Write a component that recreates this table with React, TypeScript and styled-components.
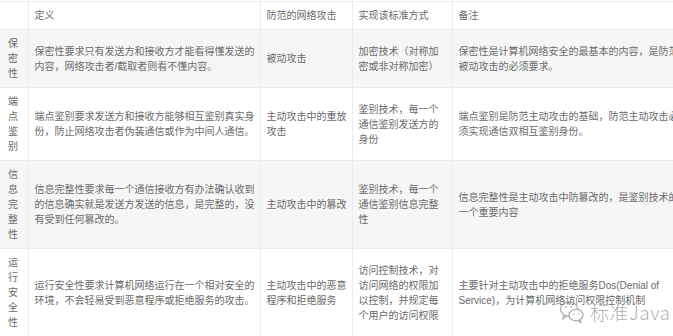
import React from "react";
import styled, { createGlobalStyle } from "styled-components";

const Global = createGlobalStyle`
  html, body { margin: 0; padding: 0; background: #fff; overflow: hidden; }
  body { width: 673px; height: 336px; }
`;

const Page = styled.div`
  position: relative;
  width: 673px;
  height: 336px;
  overflow: hidden;
  padding-top: 1px;
  box-sizing: border-box;
`;

const Table = styled.table`
  border-collapse: collapse;
  table-layout: fixed;
  width: 684px;
  font-family: "Liberation Sans", "Noto Sans CJK SC", sans-serif;
  font-size: 10px;
  line-height: 15px;
  color: #6a6a6a;
`;

const Row = styled.tr<{ $shade?: boolean }>`
  background: ${(p) => (p.$shade ? "#f6f6f6" : "#fff")};
`;

const Cell = styled.td<{ $first?: boolean }>`
  border: 1px solid #ebebeb;
  padding: ${(p) => (p.$first ? "6px 8px" : "6px 5px 6px 6px")};
  vertical-align: middle;
  text-align: left;
  overflow-wrap: anywhere;
  font-weight: 400;
  &:first-child { border-left: none; }
`;

const Mark = styled.div`
  position: absolute;
  left: 559px;
  top: 298px;
  display: flex;
  align-items: center;
  gap: 4px;
  color: rgba(150, 150, 150, 0.75);
  font-family: "Noto Sans CJK SC", "Liberation Sans", sans-serif;
  font-size: 19px;
  font-weight: 300;
  letter-spacing: 0.5px;
`;

const WeChat = () => (
  <svg width="27" height="26" viewBox="0 0 27 26" fill="none" stroke="rgba(150,150,150,0.75)" strokeWidth="1.3">
    <ellipse cx="10" cy="10" rx="8.5" ry="7" />
    <path d="M5 16 L4 20 L8 17" />
    <ellipse cx="17" cy="16" rx="7" ry="5.8" fill="#fff" />
    <path d="M21 21 L22.5 24 L19 21.5" />
    <circle cx="7" cy="8" r="0.9" fill="rgba(150,150,150,0.75)" stroke="none" />
    <circle cx="12.5" cy="8" r="0.9" fill="rgba(150,150,150,0.75)" stroke="none" />
    <circle cx="15" cy="15" r="0.8" fill="rgba(150,150,150,0.75)" stroke="none" />
    <circle cx="19.5" cy="15" r="0.8" fill="rgba(150,150,150,0.75)" stroke="none" />
  </svg>
);

type R = { name: string; def: string; attack: string; method: string; note: string };

const rows: R[] = [
  {
    name: "保密性",
    def: "保密性要求只有发送方和接收方才能看得懂发送的内容，网络攻击者/截取者则看不懂内容。",
    attack: "被动攻击",
    method: "加密技术（对称加密或非对称加密）",
    note: "保密性是计算机网络安全的最基本的内容，是防范被动攻击的必须要求。",
  },
  {
    name: "端点鉴别",
    def: "端点鉴别要求发送方和接收方能够相互鉴别真实身份，防止网络攻击者伪装通信或作为中间人通信。",
    attack: "主动攻击中的重放攻击",
    method: "鉴别技术，每一个通信鉴别发送方的身份",
    note: "端点鉴别是防范主动攻击的基础，防范主动攻击必须实现通信双相互鉴别身份。",
  },
  {
    name: "信息完整性",
    def: "信息完整性要求每一个通信接收方有办法确认收到的信息确实就是发送方发送的信息，是完整的，没有受到任何篡改的。",
    attack: "主动攻击中的篡改",
    method: "鉴别技术，每一个通信鉴别信息完整性",
    note: "信息完整性是主动攻击中防篡改的，是鉴别技术的一个重要内容",
  },
  {
    name: "运行安全性",
    def: "运行安全性要求计算机网络运行在一个相对安全的环境，不会轻易受到恶意程序或拒绝服务的攻击。",
    attack: "主动攻击中的恶意程序和拒绝服务",
    method: "访问控制技术，对访问网络的权限加以控制，并规定每个用户的访问权限",
    note: "主要针对主动攻击中的拒绝服务Dos(Denial of Service)，为计算机网络访问权限控制机制",
  },
];

export default function App() {
  return (
    <Page>
      <Global />
      <Table>
        <colgroup>
          <col style={{ width: 28 }} />
          <col style={{ width: 232 }} />
          <col style={{ width: 92 }} />
          <col style={{ width: 100 }} />
          <col style={{ width: 232 }} />
        </colgroup>
        <tbody>
          <Row>
            <Cell $first></Cell>
            <Cell>定义</Cell>
            <Cell>防范的网络攻击</Cell>
            <Cell>实现该标准方式</Cell>
            <Cell>备注</Cell>
          </Row>
          {rows.map((r, i) => (
            <Row key={r.name} $shade={i % 2 === 0}>
              <Cell $first>{r.name}</Cell>
              <Cell>{r.def}</Cell>
              <Cell>{r.attack}</Cell>
              <Cell>{r.method}</Cell>
              <Cell>{r.note}</Cell>
            </Row>
          ))}
        </tbody>
      </Table>
      <Mark>
        <WeChat />
        <span>标准Java</span>
      </Mark>
    </Page>
  );
}
